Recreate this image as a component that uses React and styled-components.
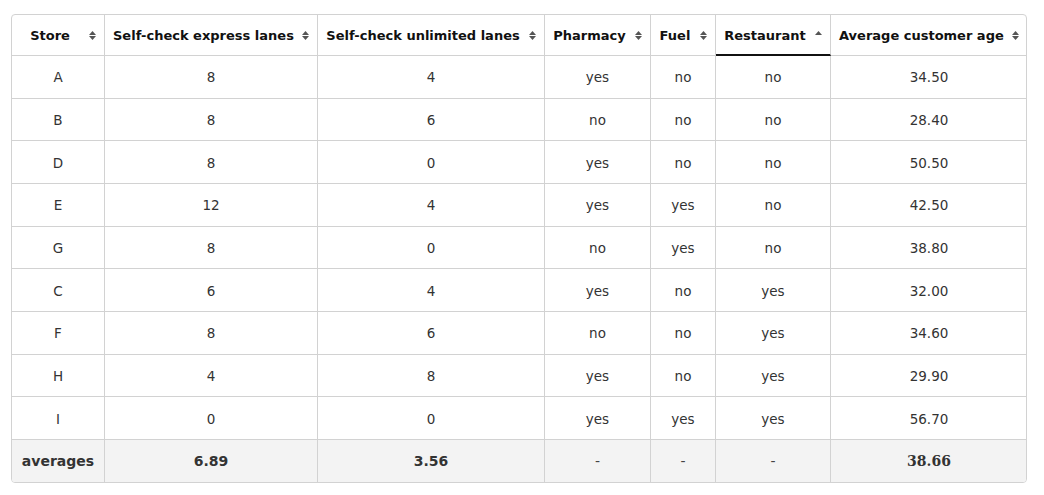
import React from 'react';
import styled, { createGlobalStyle } from 'styled-components';

const GlobalStyle = createGlobalStyle`
  body {
    margin: 0;
    background: #fff;
    font-family: Tahoma, "DejaVu Sans", sans-serif;
  }
`;

const Page = styled.div`
  padding: 14px 17px 0 11px;
`;

const Frame = styled.div`
  width: 1016px;
  box-sizing: border-box;
  border: 1px solid #d2d2d2;
  border-radius: 4px;
  overflow: hidden;
`;

const Table = styled.table`
  width: 100%;
  border-collapse: separate;
  border-spacing: 0;
  table-layout: fixed;
`;

const HeadCell = styled.th`
  position: relative;
  height: 41px;
  box-sizing: border-box;
  padding: 1px 24px 0 8px;
  font-size: 13px;
  font-weight: bold;
  color: #111;
  text-align: center;
  white-space: nowrap;
  border-right: 1px solid #d2d2d2;
  border-bottom: ${p => (p.$active ? '2px solid #111' : '1px solid #d2d2d2')};
  &:last-child { border-right: none; }
`;

const Sort = styled.svg`
  position: absolute;
  right: 8px;
  top: 50%;
  margin-top: -4px;
  width: 7px;
  height: 9px;
  fill: #555;
`;

const Cell = styled.td`
  height: 42.67px;
  box-sizing: border-box;
  padding: 1px 8px 0;
  font-size: 13.5px;
  color: #333;
  text-align: center;
  vertical-align: middle;
  border-right: 1px solid #d2d2d2;
  border-bottom: 1px solid #d2d2d2;
  &:last-child { border-right: none; }
`;

const FootCell = styled(Cell)`
  height: 42px;
  background: #f3f3f3;
  border-bottom: none;
  font-size: 14px;
  font-weight: ${p => (p.$plain ? 'normal' : 'bold')};
  color: ${p => (p.$plain ? '#444' : '#333')};
  font-family: ${p => (p.$serif ? '"DejaVu Serif", serif' : 'inherit')};
`;

const widths = [93, 213, 227, 106, 65, 115, 196];

const columns = [
  'Store',
  'Self-check express lanes',
  'Self-check unlimited lanes',
  'Pharmacy',
  'Fuel',
  'Restaurant',
  'Average customer age',
];

const rows = [
  ['A', '8', '4', 'yes', 'no', 'no', '34.50'],
  ['B', '8', '6', 'no', 'no', 'no', '28.40'],
  ['D', '8', '0', 'yes', 'no', 'no', '50.50'],
  ['E', '12', '4', 'yes', 'yes', 'no', '42.50'],
  ['G', '8', '0', 'no', 'yes', 'no', '38.80'],
  ['C', '6', '4', 'yes', 'no', 'yes', '32.00'],
  ['F', '8', '6', 'no', 'no', 'yes', '34.60'],
  ['H', '4', '8', 'yes', 'no', 'yes', '29.90'],
  ['I', '0', '0', 'yes', 'yes', 'yes', '56.70'],
];

function SortIcon({ up }) {
  return (
    <Sort viewBox="0 0 7 9">
      <polygon points="0,4 3.5,0 7,4" />
      {!up && <polygon points="0,5 7,5 3.5,9" />}
    </Sort>
  );
}

export default function App() {
  return (
    <Page>
      <GlobalStyle />
      <Frame>
        <Table>
          <colgroup>
            {widths.map((w, i) => <col key={i} style={{ width: w }} />)}
          </colgroup>
          <thead>
            <tr>
              {columns.map(c => (
                <HeadCell key={c} $active={c === 'Restaurant'}>
                  {c}
                  <SortIcon up={c === 'Restaurant'} />
                </HeadCell>
              ))}
            </tr>
          </thead>
          <tbody>
            {rows.map(r => (
              <tr key={r[0]}>
                {r.map((v, i) => <Cell key={i}>{v}</Cell>)}
              </tr>
            ))}
          </tbody>
          <tfoot>
            <tr>
              <FootCell>averages</FootCell>
              <FootCell>6.89</FootCell>
              <FootCell>3.56</FootCell>
              <FootCell $plain>-</FootCell>
              <FootCell $plain>-</FootCell>
              <FootCell $plain>-</FootCell>
              <FootCell $serif>38.66</FootCell>
            </tr>
          </tfoot>
        </Table>
      </Frame>
    </Page>
  );
}
